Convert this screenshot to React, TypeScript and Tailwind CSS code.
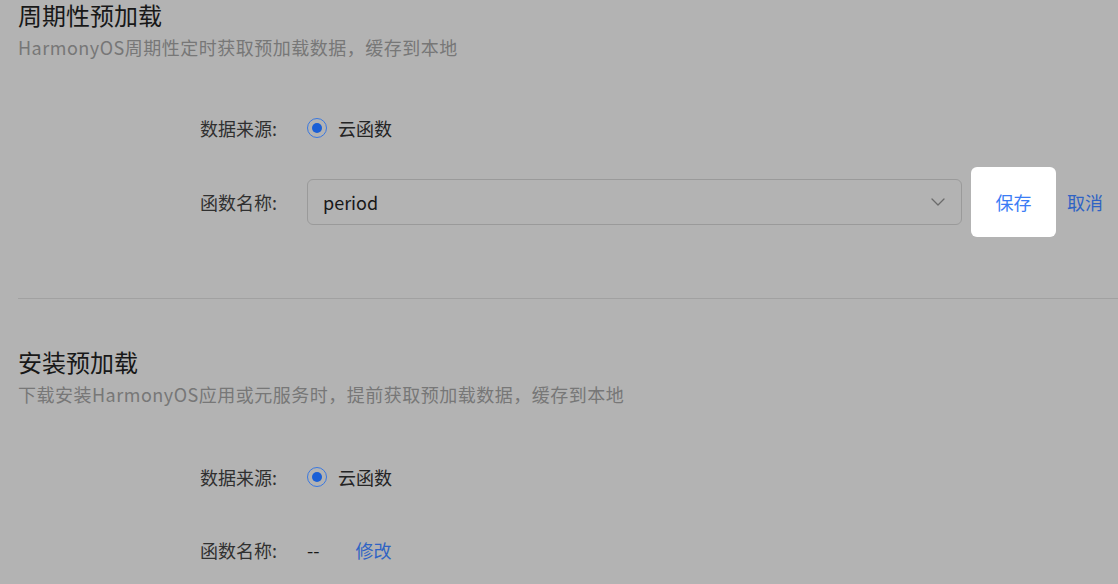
import React from 'react';

const font = "font-['Noto_Sans_CJK_SC','Noto_Sans',sans-serif]";

// The page sits under a guide mask; colours below are the dimmed values.
const Radio = ({ label }: { label: string }) => (
  <div className="flex items-center gap-[11px]">
    <span className="flex h-[20px] w-[20px] items-center justify-center rounded-full border-[1.5px] border-[#3a78e0] bg-[#b3b3b3]">
      <span className="h-[10px] w-[10px] rounded-full bg-[#1a5fd6]" />
    </span>
    <span className="text-[18px] text-[#242424]">{label}</span>
  </div>
);

const Row = ({ label, children, className = '' }: { label: string; children: React.ReactNode; className?: string }) => (
  <div className={`flex h-[46px] items-center pl-[200px] ${className}`}>
    <span className="w-[107px] shrink-0 text-[18px] text-[#303030]">{label}:</span>
    {children}
  </div>
);

const Header = ({ title, desc }: { title: string; desc: string }) => (
  <div className="pl-[18px] pt-[1px]">
    <h2 className="text-[24px] font-normal leading-[28px] text-[#181818]">{title}</h2>
    <p className="mt-[6px] text-[18px] leading-[24px] tracking-[0.5px] text-[#777]">{desc}</p>
  </div>
);

export default function App() {
  return (
    <div className={`h-[584px] w-full overflow-hidden bg-[#b3b3b3] ${font}`}>
      <section>
        <Header title="周期性预加载" desc="HarmonyOS周期性定时获取预加载数据，缓存到本地" />
        <Row label="数据来源" className="mt-[46px]">
          <Radio label="云函数" />
        </Row>
        <Row label="函数名称" className="mt-[28px]">
          <div className="flex h-[46px] w-[655px] items-center justify-between rounded-[6px] border border-[#9a9a9a] pl-[15px] pr-[16px]">
            <span className="text-[18px] text-[#181818]">period</span>
            <svg width="14" height="8" viewBox="0 0 14 8" fill="none">
              <path d="M1 1L7 7L13 1" stroke="#6b6b6b" strokeWidth="1.3" strokeLinecap="round" strokeLinejoin="round" />
            </svg>
          </div>
          <button className="ml-[9px] flex h-[70px] w-[85px] items-center justify-center rounded-[6px] bg-white text-[18px] text-[#3b7cf5]">
            保存
          </button>
          <button className="ml-[11px] text-[18px] text-[#2f63c4]">取消</button>
        </Row>
      </section>

      <div className="ml-[18px] mt-[73px] border-t border-[#a1a1a1]" />

      <section className="mt-[48px]">
        <Header title="安装预加载" desc="下载安装HarmonyOS应用或元服务时，提前获取预加载数据，缓存到本地" />
        <Row label="数据来源" className="mt-[48px]">
          <Radio label="云函数" />
        </Row>
        <Row label="函数名称" className="mt-[27px]">
          <span className="text-[18px] text-[#181818]">--</span>
          <button className="ml-[36px] text-[18px] text-[#2f63c4]">修改</button>
        </Row>
      </section>
    </div>
  );
}
